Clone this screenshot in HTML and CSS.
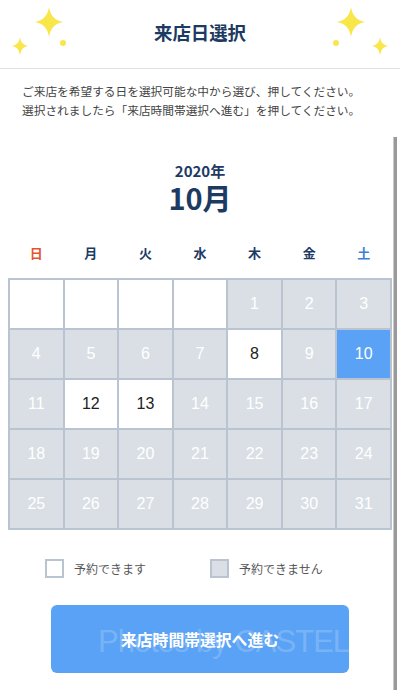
FILE: index.html
```html
<!DOCTYPE html>
<html lang="ja">
<head>
    <meta charset="UTF-8">
    <meta name="viewport" content="width=device-width, initial-scale=1.0">
    <title>来店日選択</title>
    <link rel="stylesheet" href="styles.css">
</head>
<body>
    <header class="header">
        <svg class="sparkle" width="80" height="60" viewBox="0 0 80 60">
            <path d="M49 7 Q51 20 63 22 Q51 24 49 37 Q47 24 35 22 Q47 20 49 7Z" />
            <path d="M20 37 Q21 45 28 46 Q21 47 20 55 Q19 47 12 46 Q19 45 20 37Z" />
            <circle cx="63" cy="43" r="3" />
        </svg>
        <h1 class="title">来店日選択</h1>
        <svg class="sparkle" width="80" height="60" viewBox="0 0 80 60">
            <path d="M31 7 Q33 20 45 22 Q33 24 31 37 Q29 24 17 22 Q29 20 31 7Z" />
            <path d="M60 37 Q61 45 68 46 Q61 47 60 55 Q59 47 52 46 Q59 45 60 37Z" />
            <circle cx="16" cy="43" r="3" />
        </svg>
    </header>

    <p class="intro">
        ご来店を希望する日を選択可能な中から選び、押してください。<br>
        選択されましたら「来店時間帯選択へ進む」を押してください。
    </p>

    <div class="month">
        <div class="year">2020年</div>
        <div class="month-name">10月</div>
    </div>

    <div class="weekdays">
        <span class="sun">日</span>
        <span>月</span>
        <span>火</span>
        <span>水</span>
        <span>木</span>
        <span>金</span>
        <span class="sat">土</span>
    </div>

    <div class="calendar">
        <div class="day empty"></div>
        <div class="day empty"></div>
        <div class="day empty"></div>
        <div class="day empty"></div>
        <div class="day">1</div>
        <div class="day">2</div>
        <div class="day">3</div>
        <div class="day">4</div>
        <div class="day">5</div>
        <div class="day">6</div>
        <div class="day">7</div>
        <div class="day open">8</div>
        <div class="day">9</div>
        <div class="day selected">10</div>
        <div class="day">11</div>
        <div class="day open">12</div>
        <div class="day open">13</div>
        <div class="day">14</div>
        <div class="day">15</div>
        <div class="day">16</div>
        <div class="day">17</div>
        <div class="day">18</div>
        <div class="day">19</div>
        <div class="day">20</div>
        <div class="day">21</div>
        <div class="day">22</div>
        <div class="day">23</div>
        <div class="day">24</div>
        <div class="day">25</div>
        <div class="day">26</div>
        <div class="day">27</div>
        <div class="day">28</div>
        <div class="day">29</div>
        <div class="day">30</div>
        <div class="day">31</div>
    </div>

    <div class="legend">
        <div class="legend-item">
            <span class="box"></span>
            予約できます
        </div>
        <div class="legend-item">
            <span class="box closed"></span>
            予約できません
        </div>
    </div>

    <button class="next-btn">
        <span class="watermark">Photos by CASTEL</span>
        <span class="btn-label">来店時間帯選択へ進む</span>
    </button>

    <div class="scroll-indicator"></div>
</body>
</html>
```

FILE: styles.css
```css
body {
    margin: 0;
    height: 690px;
    overflow: hidden;
    background: #fff;
    font-family: "Noto Sans CJK JP", "Liberation Sans", sans-serif;
    color: #1d3a63;
    position: relative;
}
.header {
    display: flex;
    justify-content: space-between;
    align-items: flex-start;
    height: 68px;
    border-bottom: 1px solid #dde1e5;
}
.sparkle {
    fill: #f9e64b;
}
.title {
    margin: 0;
    font-size: 18.4px;
    line-height: 24px;
    padding-top: 20px;
    font-weight: bold;
}
.intro {
    margin: 0;
    padding: 12px 0 0 22px;
    font-size: 11.7px;
    line-height: 19px;
    color: #444;
}
.month {
    margin-top: 42px;
    text-align: center;
    font-weight: bold;
}
.year {
    font-size: 15px;
    line-height: 20px;
}
.month-name {
    font-size: 29px;
    line-height: 32px;
}
.weekdays {
    margin: 30px 8px 0;
    padding: 0 2px;
    display: grid;
    grid-template-columns: repeat(7, 1fr);
    column-gap: 2px;
    font-size: 13px;
    line-height: 20px;
    font-weight: bold;
    text-align: center;
}
.sun {
    color: #e6522f;
}
.sat {
    color: #3d7fd6;
}
.calendar {
    margin: 15px 8px 0;
    padding: 2px;
    display: grid;
    grid-template-columns: repeat(7, 1fr);
    grid-auto-rows: 48px;
    gap: 2px;
    background: #b9c4d0;
}
.day {
    display: flex;
    align-items: center;
    justify-content: center;
    background: #d9dfe5;
    color: #fff;
    font-family: "Liberation Sans", sans-serif;
    font-size: 16px;
}
.day.empty,
.day.open {
    background: #fff;
    color: #222;
}
.day.selected {
    background: #5aa2f5;
    color: #fff;
}
.legend {
    margin-top: 29px;
    display: flex;
    padding-left: 45px;
    font-size: 12px;
    color: #555;
}
.legend-item {
    display: flex;
    align-items: center;
    gap: 10px;
    width: 165px;
}
.box {
    width: 15px;
    height: 15px;
    border: 2px solid #b9c4d0;
    background: #fff;
}
.box.closed {
    background: #d9dfe5;
}
.next-btn {
    display: block;
    position: relative;
    overflow: hidden;
    margin: 27px auto 0;
    width: 298px;
    height: 68px;
    border: none;
    border-radius: 6px;
    background: #5aa2f5;
    color: #fff;
    font-family: inherit;
    font-size: 15.8px;
    font-weight: bold;
    padding: 0;
}
.watermark {
    position: absolute;
    left: 47px;
    top: 19px;
    font-family: "Liberation Sans", sans-serif;
    font-weight: normal;
    font-size: 31px;
    letter-spacing: -1px;
    white-space: nowrap;
    color: rgba(255, 255, 255, 0.2);
}
.btn-label {
    position: relative;
}
.scroll-indicator {
    position: absolute;
    left: 393px;
    top: 137px;
    bottom: 0;
    width: 3px;
    background: #999;
    border-left: 1px solid #c8c8c8;
}
```
